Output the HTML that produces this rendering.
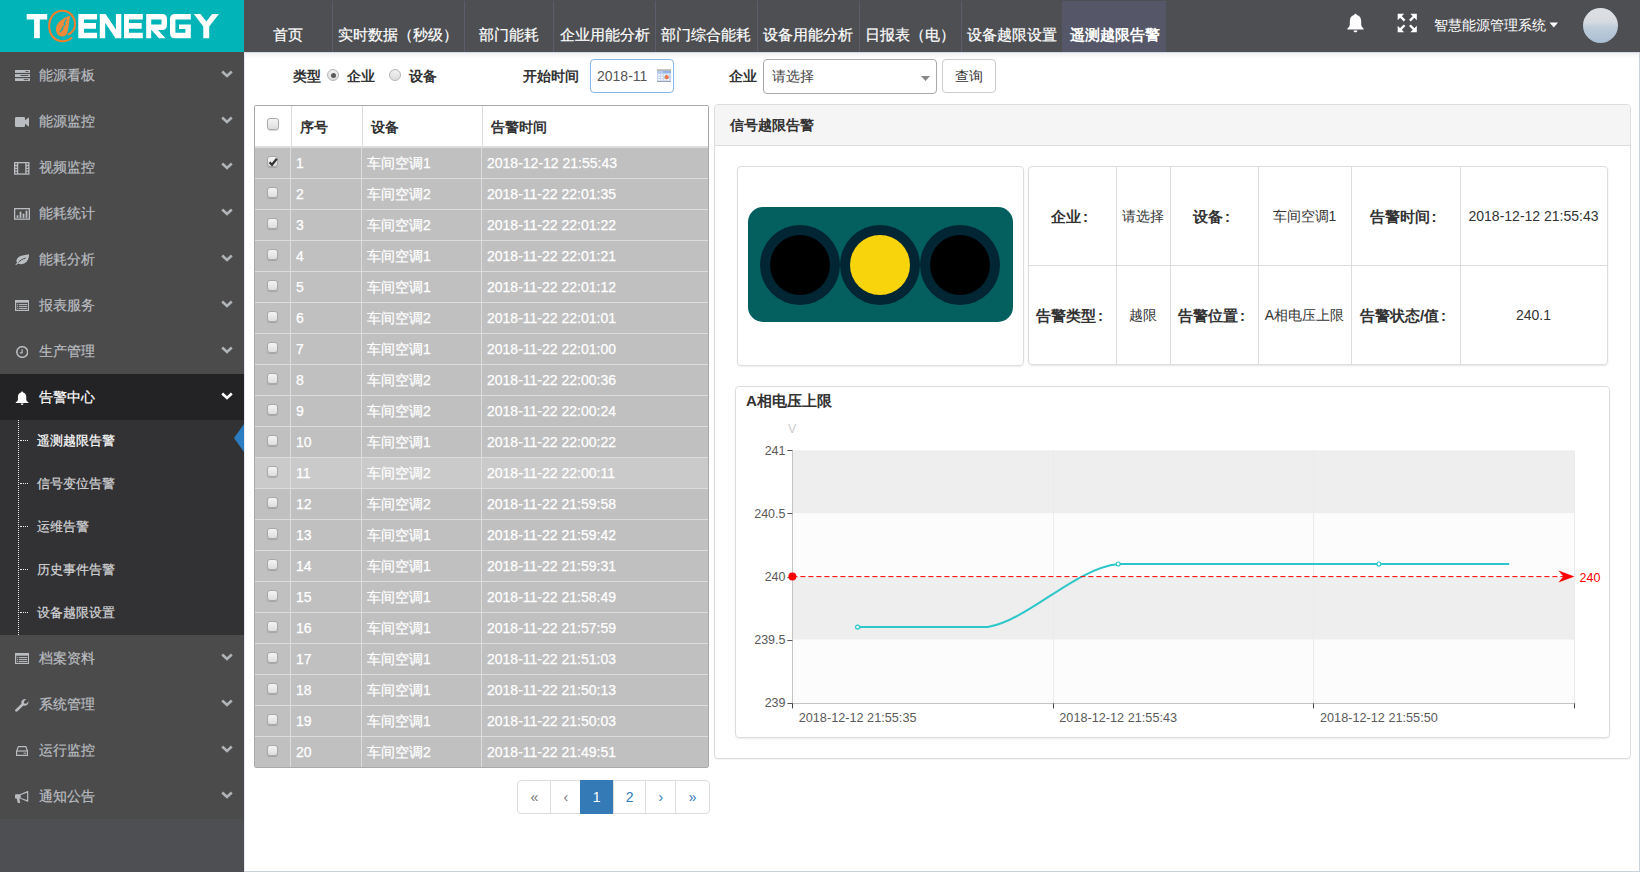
<!DOCTYPE html>
<html><head><meta charset="utf-8">
<style>
*{box-sizing:border-box;margin:0;padding:0}
html,body{width:1640px;height:877px;overflow:hidden;background:#fff;font-family:"Liberation Sans",sans-serif;position:relative}
.a{position:absolute;white-space:nowrap}
#logo{left:0;top:0;width:244px;height:52px;background:#00b4b8}
#nav{left:244px;top:0;width:1396px;height:52px;background:#4e4f53}
.tab{top:1px;height:51px;border-left:1px solid #5b5d6e;color:#fff;font-size:15px;line-height:15px;padding-top:26px;text-align:center;-webkit-text-stroke:0.2px #fff}
.tab.act{background:#555768;border-left-color:#555768;font-weight:bold;-webkit-text-stroke:0}
#side{left:0;top:52px;width:244px;height:820px;background:#4e4f53}
.mi{left:0;width:244px;height:46px;background:#4b4b4b;color:#b9bcc0;font-size:14px}
.mi .t{left:39px;top:15.5px;line-height:14px;-webkit-text-stroke:0.2px currentColor}
.mi .chev{left:221px;top:18px;width:12px;height:8px}
.sub{left:0;width:244px;height:43px;font-size:13px}
.sub .t{left:37px;top:14px;line-height:13px;-webkit-text-stroke:0.2px currentColor}
.lbl{font-weight:bold;color:#333;font-size:14px;line-height:14px}
.th{font-weight:bold;color:#333;font-size:14px;line-height:14px}
.cb{width:12px;height:12px;border:1px solid #a9a9a9;border-radius:3px;background:linear-gradient(#f4f4f4,#dedede);box-shadow:0 1px 1px rgba(0,0,0,.15)}
.row{left:0;width:454px;height:31px;background:#c0c0c0;border-bottom:1px solid #dcdcdc}
.row .c{color:#fff;font-size:14px;line-height:14px;top:8px;-webkit-text-stroke:0.25px #fff}
.vl{width:1px;background:#dcdcdc}
.pg{top:0;height:34px;border:1px solid #ddd;font-size:14px;line-height:14px;text-align:center;padding-top:9px;color:#337ab7}
</style></head><body>
<!-- header -->
<div id="logo" class="a">
<svg width="244" height="52" viewBox="0 0 244 52" style="position:absolute;left:0;top:0">
<g fill="#fff">
<rect x="26.7" y="14" width="20.5" height="5.5"/><rect x="34.1" y="14" width="5.7" height="24.2"/>
<path d="M78.3 14H97.1V19.4H84V23.1H96V28.8H84V32.8H97.1V38.2H78.3Z"/>
<path d="M99.8 14H105.6L115.9 29.5V14H121.3V38.2H115.5L105.2 22.7V38.2H99.8Z"/>
<path d="M124 14H142.8V19.4H129V23.1H141.7V28.8H129V32.8H142.8V38.2H124Z"/>
<path d="M146.2 14H162Q167 14 167 19V24.5Q167 30 162 30H158L165.5 38.2H159L151.5 30H151.2V38.2H146.2ZM151.2 19.4V24.4H161.5V19.4Z"/>
<path d="M175 14H190.8V19.4H175.4V32.8H185.4V29H179V24.4H190.8V38.2H175Q170 38.2 170 33.2V19Q170 14 175 14Z"/>
<path d="M193.8 14H200.5L206.3 21.5L212.2 14H218.9L209.2 26.5V38.2H203.3V26.5Z"/>
</g>
<g fill="none" stroke="#f07f2f" stroke-width="2.1"><path d="M72 37.4C69 40.2 65.5 41.2 62.2 41.2C54.5 41.2 49.2 34.5 49.2 26C49.2 17 55 10.7 62.3 10.7C69.8 10.7 75 17 75 24.5C75 28.5 72.5 32.5 67.8 34.6"/></g>
<path fill="#ef8a3a" d="M70 15.7C64 17.5 56 22 55.9 29C55.9 33.5 58.5 36.5 62 36.5C65 36.5 67 34.5 67.5 32C68.5 27 69.5 21 70 15.7Z"/>
<path fill="none" stroke="#00b4b8" stroke-width="1.1" d="M66.3 19.2L64.2 23.5L65.2 24L62 28.5L62.8 29L59.8 32"/>
</svg>
</div>
<div id="nav" class="a">
<div class="a tab" style="left:0;width:88px;border-left:none">首页</div>
<div class="a tab" style="left:88px;width:131.5px">实时数据（秒级）</div>
<div class="a tab" style="left:219.5px;width:89.5px">部门能耗</div>
<div class="a tab" style="left:309px;width:102px">企业用能分析</div>
<div class="a tab" style="left:411px;width:101.5px">部门综合能耗</div>
<div class="a tab" style="left:512.5px;width:102px">设备用能分析</div>
<div class="a tab" style="left:614.5px;width:102.5px">日报表（电）</div>
<div class="a tab" style="left:717px;width:101px">设备越限设置</div>
<div class="a tab act" style="left:818px;width:104px">遥测越限告警</div>
</div>

<div id="side" class="a">
<div class="a mi" style="top:0px"><svg class="a" style="left:14.5px;top:17.9px;width:15.0px;height:11.1px" viewBox="0 0 15 11.1" preserveAspectRatio="none"><g fill="#b9bcc0"><rect x="0" y="0" width="15" height="2.9"/><rect x="0" y="4.1" width="15" height="2.9"/><rect x="0" y="8.2" width="15" height="2.9"/></g><g fill="#4b4b4b"><rect x="10.5" y="1" width="2.9" height="0.9"/><rect x="5.5" y="5.1" width="7.9" height="0.9"/><rect x="8.8" y="9.2" width="4.6" height="0.9"/></g></svg><div class="a t">能源看板</div><svg class="a chev" viewBox="0 0 12 8"><path d="M1.2 1.5L6 6L10.8 1.5" fill="none" stroke="#b0b3b7" stroke-width="2.6"/></svg></div>
<div class="a mi" style="top:46px"><svg class="a" style="left:14.8px;top:19.0px;width:14.6px;height:10.0px" viewBox="0 0 15 10" preserveAspectRatio="none"><path fill="#b9bcc0" d="M1.3 0H9Q10.3 0 10.3 1.3V3.3L14.6 0V10L10.3 6.7V8.7Q10.3 10 9 10H1.3Q0 10 0 8.7V1.3Q0 0 1.3 0Z"/></svg><div class="a t">能源监控</div><svg class="a chev" viewBox="0 0 12 8"><path d="M1.2 1.5L6 6L10.8 1.5" fill="none" stroke="#b0b3b7" stroke-width="2.6"/></svg></div>
<div class="a mi" style="top:92px"><svg class="a" style="left:14.4px;top:17.9px;width:15.5px;height:12.7px" viewBox="0 0 15.5 12.7" preserveAspectRatio="none"><g fill="none" stroke="#b9bcc0" stroke-width="1.3"><rect x="0.65" y="0.65" width="14.2" height="11.4"/><path d="M3.6 0.7V12M11.9 0.7V12M0.7 3.5H3.6M0.7 6.35H3.6M0.7 9.2H3.6M11.9 3.5H14.8M11.9 6.35H14.8M11.9 9.2H14.8"/></g></svg><div class="a t">视频监控</div><svg class="a chev" viewBox="0 0 12 8"><path d="M1.2 1.5L6 6L10.8 1.5" fill="none" stroke="#b0b3b7" stroke-width="2.6"/></svg></div>
<div class="a mi" style="top:138px"><svg class="a" style="left:13.9px;top:18.0px;width:16.0px;height:11.8px" viewBox="0 0 16 11.8" preserveAspectRatio="none"><g fill="none" stroke="#b9bcc0" stroke-width="1.3"><rect x="0.65" y="0.65" width="14.7" height="10.5"/></g><g fill="#b9bcc0"><rect x="2.6" y="7.3" width="1.8" height="2.6"/><rect x="5.6" y="3.6" width="1.8" height="6.3"/><rect x="8.6" y="5.6" width="1.8" height="4.3"/><rect x="11.6" y="2.6" width="1.8" height="7.3"/></g></svg><div class="a t">能耗统计</div><svg class="a chev" viewBox="0 0 12 8"><path d="M1.2 1.5L6 6L10.8 1.5" fill="none" stroke="#b0b3b7" stroke-width="2.6"/></svg></div>
<div class="a mi" style="top:184px"><svg class="a" style="left:14.8px;top:17.7px;width:14.6px;height:11.3px" viewBox="0 0 15 12" preserveAspectRatio="none"><path fill="#b9bcc0" d="M14.6 0.2C13.5 0.8 11 1 8 1.5C3.5 2.3 1.5 5 1.5 7.5C1.5 8.3 1.8 9 2.2 9.4C1.5 10.2 0.8 11 0.3 11.6L1 12C1.6 11.3 2.5 10.5 3.2 10C4 10.5 5 10.8 6.3 10.8C11 10.8 13.5 7 14.1 3.5C14.3 2.2 14.5 1 14.6 0.2Z"/><path d="M3.6 8.8C5.5 6.6 8 5.1 11 4.3" fill="none" stroke="#4b4b4b" stroke-width="1"/></svg><div class="a t">能耗分析</div><svg class="a chev" viewBox="0 0 12 8"><path d="M1.2 1.5L6 6L10.8 1.5" fill="none" stroke="#b0b3b7" stroke-width="2.6"/></svg></div>
<div class="a mi" style="top:230px"><svg class="a" style="left:14.8px;top:17.9px;width:14.2px;height:11.1px" viewBox="0 0 14.2 11.1" preserveAspectRatio="none"><g fill="#b9bcc0"><rect x="0" y="0" width="14.2" height="2.7"/><rect x="0" y="0" width="1.2" height="11.1"/><rect x="13" y="0" width="1.2" height="11.1"/><rect x="0" y="9.9" width="14.2" height="1.2"/><rect x="2.1" y="4.1" width="0.9" height="1"/><rect x="3.8" y="4.1" width="8.6" height="1"/><rect x="2.1" y="6.1" width="0.9" height="1"/><rect x="3.8" y="6.1" width="8.6" height="1"/><rect x="2.1" y="8.1" width="0.9" height="1"/><rect x="3.8" y="8.1" width="8.6" height="1"/></g></svg><div class="a t">报表服务</div><svg class="a chev" viewBox="0 0 12 8"><path d="M1.2 1.5L6 6L10.8 1.5" fill="none" stroke="#b0b3b7" stroke-width="2.6"/></svg></div>
<div class="a mi" style="top:276px"><svg class="a" style="left:15.6px;top:17.9px;width:12.5px;height:12.1px" viewBox="0 0 12.5 12.1" preserveAspectRatio="none"><ellipse cx="6.25" cy="6.05" rx="5.45" ry="5.3" fill="none" stroke="#b9bcc0" stroke-width="1.6"/><path d="M6.1 3.2V6.8H3.8" fill="none" stroke="#b9bcc0" stroke-width="1.2"/></svg><div class="a t">生产管理</div><svg class="a chev" viewBox="0 0 12 8"><path d="M1.2 1.5L6 6L10.8 1.5" fill="none" stroke="#b0b3b7" stroke-width="2.6"/></svg></div>
<div class="a mi" style="top:322px;background:#232325;color:#fff"><svg class="a" style="left:14.8px;top:16.8px;width:14.2px;height:14.2px" viewBox="0 0 15 15" preserveAspectRatio="none"><path fill="#fff" d="M7.5 0.5C8.1 0.5 8.5 1 8.5 1.5C10.6 2 11.9 3.8 11.9 6.2V8.7C11.9 10.1 12.8 11 14.2 11.9V12.7H0.8V11.9C2.2 11 3.1 10.1 3.1 8.7V6.2C3.1 3.8 4.4 2 6.5 1.5C6.5 1 6.9 0.5 7.5 0.5ZM6 13.3H9C9 14.2 8.4 14.7 7.5 14.7C6.6 14.7 6 14.2 6 13.3Z"/></svg><div class="a t">告警中心</div><svg class="a chev" viewBox="0 0 12 8"><path d="M1.2 1.5L6 6L10.8 1.5" fill="none" stroke="#fff" stroke-width="2.6"/></svg></div>
<div class="a" style="left:0;top:368px;width:244px;height:215px;background:#323234"></div>
<div class="a" style="left:18px;top:368px;width:0;height:215px;border-left:1px dotted #e8e8e8"></div>
<div class="a sub" style="top:368px;color:#fff"><div class="a" style="left:20px;top:20px;width:8px;border-top:1px dotted #e8e8e8"></div><div class="a t">遥测越限告警</div></div>
<div class="a sub" style="top:411px;color:#d4d5d7"><div class="a" style="left:20px;top:20px;width:8px;border-top:1px dotted #e8e8e8"></div><div class="a t">信号变位告警</div></div>
<div class="a sub" style="top:454px;color:#d4d5d7"><div class="a" style="left:20px;top:20px;width:8px;border-top:1px dotted #e8e8e8"></div><div class="a t">运维告警</div></div>
<div class="a sub" style="top:497px;color:#d4d5d7"><div class="a" style="left:20px;top:20px;width:8px;border-top:1px dotted #e8e8e8"></div><div class="a t">历史事件告警</div></div>
<div class="a sub" style="top:540px;color:#d4d5d7"><div class="a" style="left:20px;top:20px;width:8px;border-top:1px dotted #e8e8e8"></div><div class="a t">设备越限设置</div></div>
<svg class="a" style="left:234px;top:372.4px" width="10" height="28" viewBox="0 0 10 28"><path d="M10 0V28L0 14Z" fill="#2b7cc0"/></svg>
<div class="a mi" style="top:583px"><svg class="a" style="left:14.8px;top:17.9px;width:14.2px;height:11.1px" viewBox="0 0 14.2 11.1" preserveAspectRatio="none"><g fill="#b9bcc0"><rect x="0" y="0" width="14.2" height="2.7"/><rect x="0" y="0" width="1.2" height="11.1"/><rect x="13" y="0" width="1.2" height="11.1"/><rect x="0" y="9.9" width="14.2" height="1.2"/><rect x="2.1" y="4.1" width="0.9" height="1"/><rect x="3.8" y="4.1" width="8.6" height="1"/><rect x="2.1" y="6.1" width="0.9" height="1"/><rect x="3.8" y="6.1" width="8.6" height="1"/><rect x="2.1" y="8.1" width="0.9" height="1"/><rect x="3.8" y="8.1" width="8.6" height="1"/></g></svg><div class="a t">档案资料</div><svg class="a chev" viewBox="0 0 12 8"><path d="M1.2 1.5L6 6L10.8 1.5" fill="none" stroke="#b0b3b7" stroke-width="2.6"/></svg></div>
<div class="a mi" style="top:629px"><svg class="a" style="left:15.3px;top:17.8px;width:13.9px;height:13.2px" viewBox="0 0 14 13.2" preserveAspectRatio="none"><path fill="#b9bcc0" d="M13.6 3C13.6 5.1 11.8 6.8 9.6 6.8C9.2 6.8 8.8 6.7 8.5 6.6L2.5 12.3C1.9 12.9 0.9 12.9 0.4 12.3C-0.1 11.7 -0.1 11 0.5 10.4L6.5 4.7C6.4 4.4 6.3 4.1 6.3 3.7C6.3 1.6 8.1 0 10.3 0C10.7 0 11 0 11.3 0.1L8.9 2.4L9.3 4.4L11.3 4.8L13.5 2.4C13.6 2.6 13.6 2.8 13.6 3Z"/></svg><div class="a t">系统管理</div><svg class="a chev" viewBox="0 0 12 8"><path d="M1.2 1.5L6 6L10.8 1.5" fill="none" stroke="#b0b3b7" stroke-width="2.6"/></svg></div>
<div class="a mi" style="top:675px"><svg class="a" style="left:15.8px;top:19.0px;width:12.2px;height:10.0px" viewBox="0 0 12.2 10" preserveAspectRatio="none"><g fill="none" stroke="#b9bcc0" stroke-width="1.2"><path d="M2.4 0.6H9.8L11.6 5V9.4H0.6V5Z"/><path d="M0.6 5H11.6"/></g><g fill="#b9bcc0"><rect x="7.6" y="6.6" width="1.2" height="1.2"/><rect x="9.2" y="6.6" width="1.2" height="1.2"/></g></svg><div class="a t">运行监控</div><svg class="a chev" viewBox="0 0 12 8"><path d="M1.2 1.5L6 6L10.8 1.5" fill="none" stroke="#b0b3b7" stroke-width="2.6"/></svg></div>
<div class="a mi" style="top:721px"><svg class="a" style="left:14.8px;top:17.7px;width:14.2px;height:12.3px" viewBox="0 0 14.2 12.3" preserveAspectRatio="none"><path fill="#b9bcc0" d="M13.3 0.1H12.6L4.8 3.2H1.1Q0 3.2 0 4.4V6.4Q0 7.6 1.1 7.6H1.7L2.9 12.2H5.2L4.4 7.6H4.8L12.6 10.7H13.3ZM12.1 1.7V9.1L5.7 6.9V4Z"/></svg><div class="a t">通知公告</div><svg class="a chev" viewBox="0 0 12 8"><path d="M1.2 1.5L6 6L10.8 1.5" fill="none" stroke="#b0b3b7" stroke-width="2.6"/></svg></div>
</div>
<div class="a" style="left:244px;top:52px;width:1396px;height:7px;background:linear-gradient(#d4dbe5 0px,#d4dbe5 1px,#f1f1f1 1px,#f7f7f7 3.5px,#fff 7px)"></div>
<div class="a" style="left:1639px;top:52px;width:1px;height:820px;background:#c9d1dd"></div>
<div class="a" style="left:244px;top:52px;width:1px;height:820px;background:#e3e8ee"></div>
<div class="a" style="left:244px;top:871px;width:1396px;height:1px;background:#c9d1dd"></div>
<div class="a lbl" style="left:293px;top:69px">类型</div>
<div class="a" style="left:327px;top:69.3px;width:12px;height:12px;border-radius:50%;border:1px solid #b5b5b5;background:linear-gradient(#f2f2f2,#dcdcdc)"><div class="a" style="left:2.5px;top:2.5px;width:5px;height:5px;border-radius:50%;background:#5a5a5a"></div></div>
<div class="a lbl" style="left:347px;top:69px">企业</div>
<div class="a" style="left:389px;top:69.3px;width:12px;height:12px;border-radius:50%;border:1px solid #b5b5b5;background:linear-gradient(#f2f2f2,#dcdcdc)"></div>
<div class="a lbl" style="left:409px;top:69px">设备</div>
<div class="a lbl" style="left:523px;top:69px">开始时间</div>
<div class="a" style="left:590px;top:59px;width:84px;height:34px;border:1px solid #8db6e8;border-radius:4px;box-shadow:0 0 1px rgba(102,175,233,.4)"></div>
<div class="a" style="left:597px;top:69px;font-size:14px;line-height:14px;color:#555">2018-11</div>
<svg class="a" style="left:657px;top:69px" width="14" height="13" viewBox="0 0 14 13"><rect x="0" y="0.3" width="14" height="1.7" fill="#b4b4b4"/><rect x="0" y="2" width="14" height="2.6" fill="#93b4ec"/><rect x="0" y="2" width="6" height="2.6" fill="#b3caf2"/><rect x="0" y="4.6" width="14" height="7.4" fill="#c9d7ee"/><g fill="#f4f7fc"><rect x="1" y="5.3" width="2" height="1.3"/><rect x="4" y="5.3" width="2" height="1.3"/><rect x="7" y="5.3" width="2" height="1.3"/><rect x="10" y="5.3" width="2" height="1.3"/><rect x="1" y="7.7" width="2" height="1.3"/><rect x="4" y="7.7" width="2" height="1.3"/><rect x="1" y="10" width="2" height="1.3"/><rect x="4" y="10" width="2" height="1.3"/><rect x="7" y="10" width="2" height="1.3"/><rect x="10" y="10" width="2" height="1.3"/></g><circle cx="9.7" cy="8.2" r="2.1" fill="#e9774f"/><rect x="0" y="12" width="14" height="1" fill="#97a3b6"/></svg>
<div class="a lbl" style="left:729px;top:69px">企业</div>
<div class="a" style="left:763px;top:59px;width:174px;height:35px;border:1px solid #aaa;border-radius:4px;background:#fff"></div>
<div class="a" style="left:772px;top:69px;font-size:14px;line-height:14px;color:#444">请选择</div>
<svg class="a" style="left:921px;top:76px" width="9" height="5" viewBox="0 0 9 5"><path d="M0 0H9L4.5 5Z" fill="#888"/></svg>
<div class="a" style="left:942px;top:59px;width:54px;height:34px;border:1px solid #ccc;border-radius:4px;background:#fff"></div>
<div class="a" style="left:955px;top:69px;font-size:14px;line-height:14px;color:#333">查询</div>
<div class="a" style="left:254px;top:105px;width:455px;height:663px;border:1px solid #aaa;border-radius:2px;overflow:hidden;background:#fff">
<div class="a" style="left:0;top:0;width:453px;height:42px;background:#fff;border-bottom:2px solid #ddd"></div>
<div class="a vl" style="left:36px;top:0;height:41px"></div><div class="a vl" style="left:107px;top:0;height:41px"></div><div class="a vl" style="left:227px;top:0;height:41px"></div>
<div class="a cb" style="left:11.5px;top:12px"></div>
<div class="a th" style="left:45px;top:14px">序号</div>
<div class="a th" style="left:116px;top:14px">设备</div>
<div class="a th" style="left:236px;top:14px">告警时间</div>
<div class="a row" style="top:42px;"><div class="a c" style="left:41px">1</div><div class="a c" style="left:112px">车间空调1</div><div class="a c" style="left:232px">2018-12-12 21:55:43</div></div>
<div class="a cb" style="left:11.5px;top:50px;width:11px;height:11px"><svg class="a" style="left:0.5px;top:-0.5px" width="10" height="10" viewBox="0 0 10 10"><path d="M1.5 5.2L4 7.8L8.8 1.8" fill="none" stroke="#333" stroke-width="2.2"/></svg></div>
<div class="a row" style="top:73px;"><div class="a c" style="left:41px">2</div><div class="a c" style="left:112px">车间空调2</div><div class="a c" style="left:232px">2018-11-22 22:01:35</div></div>
<div class="a cb" style="left:11.5px;top:81px;width:11px;height:11px"></div>
<div class="a row" style="top:104px;"><div class="a c" style="left:41px">3</div><div class="a c" style="left:112px">车间空调2</div><div class="a c" style="left:232px">2018-11-22 22:01:22</div></div>
<div class="a cb" style="left:11.5px;top:112px;width:11px;height:11px"></div>
<div class="a row" style="top:135px;"><div class="a c" style="left:41px">4</div><div class="a c" style="left:112px">车间空调1</div><div class="a c" style="left:232px">2018-11-22 22:01:21</div></div>
<div class="a cb" style="left:11.5px;top:143px;width:11px;height:11px"></div>
<div class="a row" style="top:166px;"><div class="a c" style="left:41px">5</div><div class="a c" style="left:112px">车间空调1</div><div class="a c" style="left:232px">2018-11-22 22:01:12</div></div>
<div class="a cb" style="left:11.5px;top:174px;width:11px;height:11px"></div>
<div class="a row" style="top:197px;"><div class="a c" style="left:41px">6</div><div class="a c" style="left:112px">车间空调2</div><div class="a c" style="left:232px">2018-11-22 22:01:01</div></div>
<div class="a cb" style="left:11.5px;top:205px;width:11px;height:11px"></div>
<div class="a row" style="top:228px;"><div class="a c" style="left:41px">7</div><div class="a c" style="left:112px">车间空调1</div><div class="a c" style="left:232px">2018-11-22 22:01:00</div></div>
<div class="a cb" style="left:11.5px;top:236px;width:11px;height:11px"></div>
<div class="a row" style="top:259px;"><div class="a c" style="left:41px">8</div><div class="a c" style="left:112px">车间空调2</div><div class="a c" style="left:232px">2018-11-22 22:00:36</div></div>
<div class="a cb" style="left:11.5px;top:267px;width:11px;height:11px"></div>
<div class="a row" style="top:290px;"><div class="a c" style="left:41px">9</div><div class="a c" style="left:112px">车间空调2</div><div class="a c" style="left:232px">2018-11-22 22:00:24</div></div>
<div class="a cb" style="left:11.5px;top:298px;width:11px;height:11px"></div>
<div class="a row" style="top:321px;"><div class="a c" style="left:41px">10</div><div class="a c" style="left:112px">车间空调1</div><div class="a c" style="left:232px">2018-11-22 22:00:22</div></div>
<div class="a cb" style="left:11.5px;top:329px;width:11px;height:11px"></div>
<div class="a row" style="top:352px;background:#cacaca"><div class="a c" style="left:41px">11</div><div class="a c" style="left:112px">车间空调2</div><div class="a c" style="left:232px">2018-11-22 22:00:11</div></div>
<div class="a cb" style="left:11.5px;top:360px;width:11px;height:11px"></div>
<div class="a row" style="top:383px;"><div class="a c" style="left:41px">12</div><div class="a c" style="left:112px">车间空调2</div><div class="a c" style="left:232px">2018-11-22 21:59:58</div></div>
<div class="a cb" style="left:11.5px;top:391px;width:11px;height:11px"></div>
<div class="a row" style="top:414px;"><div class="a c" style="left:41px">13</div><div class="a c" style="left:112px">车间空调1</div><div class="a c" style="left:232px">2018-11-22 21:59:42</div></div>
<div class="a cb" style="left:11.5px;top:422px;width:11px;height:11px"></div>
<div class="a row" style="top:445px;"><div class="a c" style="left:41px">14</div><div class="a c" style="left:112px">车间空调1</div><div class="a c" style="left:232px">2018-11-22 21:59:31</div></div>
<div class="a cb" style="left:11.5px;top:453px;width:11px;height:11px"></div>
<div class="a row" style="top:476px;"><div class="a c" style="left:41px">15</div><div class="a c" style="left:112px">车间空调1</div><div class="a c" style="left:232px">2018-11-22 21:58:49</div></div>
<div class="a cb" style="left:11.5px;top:484px;width:11px;height:11px"></div>
<div class="a row" style="top:507px;"><div class="a c" style="left:41px">16</div><div class="a c" style="left:112px">车间空调1</div><div class="a c" style="left:232px">2018-11-22 21:57:59</div></div>
<div class="a cb" style="left:11.5px;top:515px;width:11px;height:11px"></div>
<div class="a row" style="top:538px;"><div class="a c" style="left:41px">17</div><div class="a c" style="left:112px">车间空调1</div><div class="a c" style="left:232px">2018-11-22 21:51:03</div></div>
<div class="a cb" style="left:11.5px;top:546px;width:11px;height:11px"></div>
<div class="a row" style="top:569px;"><div class="a c" style="left:41px">18</div><div class="a c" style="left:112px">车间空调1</div><div class="a c" style="left:232px">2018-11-22 21:50:13</div></div>
<div class="a cb" style="left:11.5px;top:577px;width:11px;height:11px"></div>
<div class="a row" style="top:600px;"><div class="a c" style="left:41px">19</div><div class="a c" style="left:112px">车间空调1</div><div class="a c" style="left:232px">2018-11-22 21:50:03</div></div>
<div class="a cb" style="left:11.5px;top:608px;width:11px;height:11px"></div>
<div class="a row" style="top:631px;"><div class="a c" style="left:41px">20</div><div class="a c" style="left:112px">车间空调2</div><div class="a c" style="left:232px">2018-11-22 21:49:51</div></div>
<div class="a cb" style="left:11.5px;top:639px;width:11px;height:11px"></div>
<div class="a vl" style="left:35px;top:42px;height:620px"></div><div class="a vl" style="left:106px;top:42px;height:620px"></div><div class="a vl" style="left:226px;top:42px;height:620px"></div>
</div>
<div class="a" style="left:517.3px;top:780px;width:193px;height:34px">
<div class="a pg" style="left:0.0px;width:34.0px;color:#777;border-radius:4px 0 0 4px;">«</div>
<div class="a pg" style="left:33.0px;width:31.0px;color:#777;">‹</div>
<div class="a pg" style="left:63.0px;width:32.5px;color:#fff;background:#337ab7;border-color:#337ab7;z-index:2;">1</div>
<div class="a pg" style="left:95.5px;width:33.5px;color:#337ab7;">2</div>
<div class="a pg" style="left:128.0px;width:31.2px;color:#337ab7;">›</div>
<div class="a pg" style="left:158.2px;width:34.2px;color:#337ab7;border-radius:0 4px 4px 0;">»</div>
</div>
<div class="a" style="left:714px;top:104px;width:917px;height:655px;border:1px solid #ddd;border-radius:4px;background:#fff;box-shadow:0 1px 1px rgba(0,0,0,.05)"></div>
<div class="a" style="left:715px;top:105px;width:915px;height:41px;background:#f5f5f5;border-bottom:1px solid #ddd;border-radius:3px 3px 0 0"></div>
<div class="a" style="left:730px;top:118px;font-size:14px;line-height:14px;font-weight:bold;color:#333">信号越限告警</div>
<div class="a" style="left:737px;top:166px;width:287px;height:200px;border:1px solid #ddd;border-radius:4px;box-shadow:0 1px 2px rgba(0,0,0,.08)"></div>
<div class="a" style="left:748.3px;top:206.9px;width:264.3px;height:115.6px;border-radius:15px;background:#045f5f"></div>
<div class="a" style="left:760.3px;top:224.7px;width:80px;height:80px;border-radius:50%;background:#032634"></div>
<div class="a" style="left:770.3px;top:234.7px;width:60px;height:60px;border-radius:50%;background:#000"></div>
<div class="a" style="left:840.4px;top:224.7px;width:80px;height:80px;border-radius:50%;background:#032634"></div>
<div class="a" style="left:850.4px;top:234.7px;width:60px;height:60px;border-radius:50%;background:#f7d40c"></div>
<div class="a" style="left:920.3px;top:224.7px;width:80px;height:80px;border-radius:50%;background:#032634"></div>
<div class="a" style="left:930.3px;top:234.7px;width:60px;height:60px;border-radius:50%;background:#000"></div>
<div class="a" style="left:1028px;top:166px;width:580px;height:199px;border:1px solid #ddd;border-radius:4px;box-shadow:0 1px 2px rgba(0,0,0,.1)"></div>
<div class="a" style="left:1029px;top:265px;width:578px;height:1px;background:#ddd"></div>
<div class="a" style="left:1116.0px;top:167px;width:1px;height:197px;background:#ddd"></div>
<div class="a" style="left:1170.0px;top:167px;width:1px;height:197px;background:#ddd"></div>
<div class="a" style="left:1258.0px;top:167px;width:1px;height:197px;background:#ddd"></div>
<div class="a" style="left:1351.0px;top:167px;width:1px;height:197px;background:#ddd"></div>
<div class="a" style="left:1460.0px;top:167px;width:1px;height:197px;background:#ddd"></div>
<div class="a" style="left:1028.0px;top:208.5px;width:88.0px;text-align:center;padding-left:3px;font-size:15px;line-height:15px;font-weight:bold;color:#333">企业<span style="margin-left:2px">:</span><span style="display:inline-block;width:8px"></span></div>
<div class="a" style="left:1116.0px;top:209.0px;width:54.0px;text-align:center;font-size:14px;line-height:14px;color:#333">请选择</div>
<div class="a" style="left:1170.0px;top:208.5px;width:88.0px;text-align:center;padding-left:3px;font-size:15px;line-height:15px;font-weight:bold;color:#333">设备<span style="margin-left:2px">:</span><span style="display:inline-block;width:8px"></span></div>
<div class="a" style="left:1258.0px;top:209.0px;width:93.0px;text-align:center;font-size:14px;line-height:14px;color:#333">车间空调1</div>
<div class="a" style="left:1351.0px;top:208.5px;width:109.0px;text-align:center;padding-left:3px;font-size:15px;line-height:15px;font-weight:bold;color:#333">告警时间<span style="margin-left:2px">:</span><span style="display:inline-block;width:8px"></span></div>
<div class="a" style="left:1460.0px;top:209.0px;width:147.0px;text-align:center;font-size:14px;line-height:14px;color:#333">2018-12-12 21:55:43</div>
<div class="a" style="left:1028.0px;top:307.5px;width:88.0px;text-align:center;padding-left:3px;font-size:15px;line-height:15px;font-weight:bold;color:#333">告警类型<span style="margin-left:2px">:</span><span style="display:inline-block;width:8px"></span></div>
<div class="a" style="left:1116.0px;top:308.0px;width:54.0px;text-align:center;font-size:14px;line-height:14px;color:#333">越限</div>
<div class="a" style="left:1170.0px;top:307.5px;width:88.0px;text-align:center;padding-left:3px;font-size:15px;line-height:15px;font-weight:bold;color:#333">告警位置<span style="margin-left:2px">:</span><span style="display:inline-block;width:8px"></span></div>
<div class="a" style="left:1258.0px;top:308.0px;width:93.0px;text-align:center;font-size:14px;line-height:14px;color:#333">A相电压上限</div>
<div class="a" style="left:1351.0px;top:307.5px;width:109.0px;text-align:center;padding-left:3px;font-size:15px;line-height:15px;font-weight:bold;color:#333">告警状态/值<span style="margin-left:2px">:</span><span style="display:inline-block;width:8px"></span></div>
<div class="a" style="left:1460.0px;top:308.0px;width:147.0px;text-align:center;font-size:14px;line-height:14px;color:#333">240.1</div>
<div class="a" style="left:735px;top:386px;width:875px;height:352px;border:1px solid #ddd;border-radius:4px;box-shadow:0 1px 2px rgba(0,0,0,.08)"></div>
<div class="a" style="left:746px;top:393px;font-size:15px;line-height:15px;font-weight:bold;color:#333">A相电压上限</div>
<svg class="a" style="left:0;top:0" width="1640" height="877" viewBox="0 0 1640 877">
<rect x="792.4" y="450.3" width="782.0" height="63.2" fill="#eeeeee"/>
<rect x="792.4" y="513.5" width="782.0" height="63.1" fill="#fcfcfc"/>
<rect x="792.4" y="576.6" width="782.0" height="63.1" fill="#eeeeee"/>
<rect x="792.4" y="639.8" width="782.0" height="63.1" fill="#fcfcfc"/>
<path d="M1053.5 450.3V702.9" stroke="#ebebeb" stroke-width="1"/>
<path d="M1313.5 450.3V702.9" stroke="#ebebeb" stroke-width="1"/>
<path d="M1574.5 450.3V702.9" stroke="#ebebeb" stroke-width="1"/>
<path d="M792.5 450.3V702.9" stroke="#c4c4c4" stroke-width="1"/>
<path d="M792.0 703.5H1574.4" stroke="#c4c4c4" stroke-width="1"/>
<path d="M787.4 450.5H792.4" stroke="#555" stroke-width="1"/>
<path d="M787.4 513.5H792.4" stroke="#555" stroke-width="1"/>
<path d="M787.4 577.5H792.4" stroke="#555" stroke-width="1"/>
<path d="M787.4 640.5H792.4" stroke="#555" stroke-width="1"/>
<path d="M787.4 703.5H792.4" stroke="#555" stroke-width="1"/>
<path d="M792.5 703.4V708.4" stroke="#444" stroke-width="1"/>
<path d="M1053.5 703.4V708.4" stroke="#444" stroke-width="1"/>
<path d="M1313.5 703.4V708.4" stroke="#444" stroke-width="1"/>
<path d="M1574.5 703.4V708.4" stroke="#444" stroke-width="1"/>
<path d="M857.6 627.1L987.9 627.1C1029.9 619.2 1074.6 568.7 1118.2 564.0L1509.2 564.0" fill="none" stroke="#2ec7c9" stroke-width="2"/>
<path d="M792.4 576.6H1564.4" stroke="#f00" stroke-width="1" stroke-dasharray="5,3"/>
<path d="M1574.4 576.6L1558.4 570.6L1563.4 576.6L1558.4 582.6Z" fill="#f00"/>
<circle cx="792.4" cy="576.6" r="4" fill="#f00"/>
<circle cx="857.6" cy="627.1" r="2" fill="#fff" stroke="#2ec7c9" stroke-width="1.2"/>
<circle cx="1118.2" cy="564.0" r="2" fill="#fff" stroke="#2ec7c9" stroke-width="1.2"/>
<circle cx="1378.9" cy="564.0" r="2" fill="#fff" stroke="#2ec7c9" stroke-width="1.2"/>
</svg>
<div class="a" style="left:700px;width:85.5px;text-align:right;top:444.8px;font-size:12.5px;line-height:12.5px;color:#5a5a5a">241</div>
<div class="a" style="left:700px;width:85.5px;text-align:right;top:508.0px;font-size:12.5px;line-height:12.5px;color:#5a5a5a">240.5</div>
<div class="a" style="left:700px;width:85.5px;text-align:right;top:571.1px;font-size:12.5px;line-height:12.5px;color:#5a5a5a">240</div>
<div class="a" style="left:700px;width:85.5px;text-align:right;top:634.2px;font-size:12.5px;line-height:12.5px;color:#5a5a5a">239.5</div>
<div class="a" style="left:700px;width:85.5px;text-align:right;top:697.4px;font-size:12.5px;line-height:12.5px;color:#5a5a5a">239</div>
<div class="a" style="left:788px;top:423px;font-size:12.5px;line-height:12.5px;color:#ccc">V</div>
<div class="a" style="left:777.6px;width:160px;text-align:center;top:711.8px;font-size:12.7px;line-height:12.7px;color:#5a5a5a">2018-12-12 21:55:35</div>
<div class="a" style="left:1038.2px;width:160px;text-align:center;top:711.8px;font-size:12.7px;line-height:12.7px;color:#5a5a5a">2018-12-12 21:55:43</div>
<div class="a" style="left:1298.9px;width:160px;text-align:center;top:711.8px;font-size:12.7px;line-height:12.7px;color:#5a5a5a">2018-12-12 21:55:50</div>
<div class="a" style="left:1579.5px;top:571.5px;font-size:12.5px;line-height:12.5px;color:#f00">240</div>
<!-- header right -->
<svg class="a" style="left:1346px;top:13px" width="19" height="20" viewBox="0 0 19 20">
<path fill="#fff" d="M9.5 0.8C10.3 0.8 10.8 1.4 10.8 2.1C13.6 2.7 15.2 5 15.2 8.2V11.6C15.2 13.4 16.4 14.6 17.6 15.6V16.6H1.4V15.6C2.6 14.6 3.8 13.4 3.8 11.6V8.2C3.8 5 5.4 2.7 8.2 2.1C8.2 1.4 8.7 0.8 9.5 0.8ZM7.6 17.4H11.4C11.4 18.6 10.6 19.3 9.5 19.3C8.4 19.3 7.6 18.6 7.6 17.4Z"/>
</svg>
<svg class="a" style="left:1397px;top:13px" width="21" height="20" viewBox="0 0 21 20">
<g fill="#fff"><path d="M0.7 0.7H7.2L0.7 7.2Z"/><path d="M19.8 0.7H13.3L19.8 7.2Z"/><path d="M0.7 19.2H7.2L0.7 12.7Z"/><path d="M19.8 19.2H13.3L19.8 12.7Z"/></g>
<g stroke="#fff" stroke-width="2.3"><path d="M2.5 2.5L7.6 7.6"/><path d="M18 2.5L12.9 7.6"/><path d="M2.5 17.4L7.6 12.3"/><path d="M18 17.4L12.9 12.3"/></g>
</svg>
<div class="a" style="left:1434px;top:18px;color:#fff;font-size:14px;line-height:14px">智慧能源管理系统</div>
<svg class="a" style="left:1549px;top:22px" width="10" height="6" viewBox="0 0 10 6"><path fill="#fff" d="M0.5 0.5H9L4.75 5.5Z"/></svg>
<div class="a" style="left:1583px;top:7.7px;width:35px;height:35px;border-radius:50%;background:linear-gradient(#dde0e3 0%,#d7dbe0 40%,#bfcddb 55%,#a9bed2 100%)"></div>
</body></html>
